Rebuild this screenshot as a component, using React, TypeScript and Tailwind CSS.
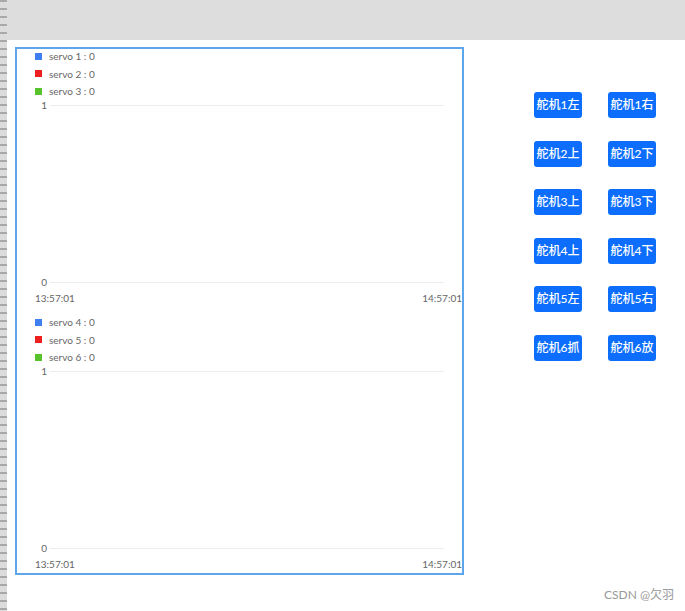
import React from 'react';

const FONT = "font-['Lato','Noto_Sans_CJK_SC',sans-serif]";

type Series = { name: string; color: string };

const chartA: Series[] = [
  { name: 'servo 1 : 0', color: 'bg-[#3f7ff2]' },
  { name: 'servo 2 : 0', color: 'bg-[#ee1f1f]' },
  { name: 'servo 3 : 0', color: 'bg-[#57c22b]' },
];

const chartB: Series[] = [
  { name: 'servo 4 : 0', color: 'bg-[#3f7ff2]' },
  { name: 'servo 5 : 0', color: 'bg-[#ee1f1f]' },
  { name: 'servo 6 : 0', color: 'bg-[#57c22b]' },
];

const buttons = [
  ['舵机1左', '舵机1右'],
  ['舵机2上', '舵机2下'],
  ['舵机3上', '舵机3下'],
  ['舵机4上', '舵机4下'],
  ['舵机5左', '舵机5右'],
  ['舵机6抓', '舵机6放'],
];

const AxisRow = ({ label }: { label: string }) => (
  <div className="flex h-[12px] items-center">
    <span className="w-[30px] text-right leading-[12px]">{label}</span>
    <div className="ml-[3px] mr-[18px] h-px flex-1 bg-[#ececec]" />
  </div>
);

const Chart = ({ series }: { series: Series[] }) => (
  <div className="flex h-[266px] shrink-0 flex-col text-[10px] text-[#666]">
    <div className="flex flex-col gap-[5.5px] pl-[18px] pt-[1px]">
      {series.map((s) => (
        <div key={s.name} className="flex h-[12px] items-center">
          <span className={`h-[7px] w-[7px] ${s.color}`} />
          <span className="ml-[7px] leading-[12px]">{s.name}</span>
        </div>
      ))}
    </div>
    <div className="mt-[2px] flex h-[189px] flex-col justify-between">
      <AxisRow label="1" />
      <AxisRow label="0" />
    </div>
    <div className="mt-[4px] flex h-[12px] items-center justify-between pl-[18px] leading-[12px]">
      <span>13:57:01</span>
      <span>14:57:01</span>
    </div>
  </div>
);

const App: React.FC = () => {
  return (
    <div className={`relative flex h-[611px] w-[685px] overflow-hidden bg-white ${FONT}`}>
      {/* left ruler stripe */}
      <div className="h-full w-[7px] shrink-0 bg-[image:repeating-linear-gradient(to_bottom,#a9a9a9_0px,#a9a9a9_2px,#dcdcdc_2px,#dcdcdc_8px)]" />

      <div className="flex flex-1 flex-col">
        <div className="h-[40px] shrink-0 bg-[#dddddd]" />

        <div className="flex">
          <div className="ml-[8px] mt-[7px] flex h-[528px] w-[449px] shrink-0 flex-col overflow-hidden border-2 border-[#5ea6ec]">
            <Chart series={chartA} />
            <Chart series={chartB} />
          </div>

          <div className="ml-[70px] mt-[52px] grid grid-cols-[48px_48px] gap-x-[26px] gap-y-[22.6px] self-start">
            {buttons.flat().map((b) => (
              <button
                key={b}
                className="flex h-[26px] w-[48px] items-center justify-center rounded-[3px] bg-[#0d6efd] text-[12px] font-medium leading-none text-white"
              >
                {b}
              </button>
            ))}
          </div>
        </div>
      </div>

      <span className="absolute left-[604px] top-[587px] text-[12px] leading-[16px] text-[#999]">CSDN @欠羽</span>
    </div>
  );
};

export default App;
